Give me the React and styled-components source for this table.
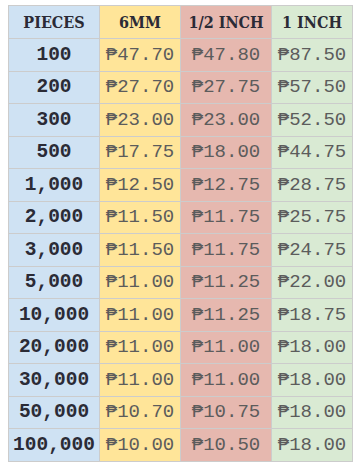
import React from 'react'
import styled, { createGlobalStyle } from 'styled-components'

const GlobalStyle = createGlobalStyle`
    body {
        margin: 0;
        background: #ffffff;
    }
`

const Wrap = styled.div`
    padding: 5px 0 0 8px;
`

const Table = styled.table`
    border-collapse: collapse;
    table-layout: fixed;
    width: 344px;
`

const Col = styled.col`
    width: ${(props) => props.width}px;
`

const Head = styled.th`
    height: 32px;
    padding: 0;
    background: ${(props) => props.bg};
    border: 1px solid #cccccc;
    font-family: "DejaVu Serif", serif;
    font-stretch: condensed;
    font-weight: bold;
    font-size: 16px;
    color: #2b2b36;
    text-align: center;
    white-space: nowrap;
`

const Cell = styled.td`
    height: 31.5px;
    padding: 0;
    background: ${(props) => props.bg};
    border: 1px solid #cccccc;
    font-family: "Liberation Mono", "DejaVu Sans Mono", monospace;
    font-weight: ${(props) => (props.bold ? 'bold' : 'normal')};
    font-size: ${(props) => (props.bold ? '19.5px' : '19px')};
    color: ${(props) => (props.bold ? '#2b2b36' : '#5c5c5c')};
    text-align: center;
    white-space: nowrap;
`

const colors = ['#cfe2f3', '#ffe599', '#e6b8af', '#d9ead3']

const rows = [
    ['100', '47.70', '47.80', '87.50'],
    ['200', '27.70', '27.75', '57.50'],
    ['300', '23.00', '23.00', '52.50'],
    ['500', '17.75', '18.00', '44.75'],
    ['1,000', '12.50', '12.75', '28.75'],
    ['2,000', '11.50', '11.75', '25.75'],
    ['3,000', '11.50', '11.75', '24.75'],
    ['5,000', '11.00', '11.25', '22.00'],
    ['10,000', '11.00', '11.25', '18.75'],
    ['20,000', '11.00', '11.00', '18.00'],
    ['30,000', '11.00', '11.00', '18.00'],
    ['50,000', '10.70', '10.75', '18.00'],
    ['100,000', '10.00', '10.50', '18.00'],
]

function App() {
    return (
        <>
            <GlobalStyle />
            <Wrap>
                <Table>
                    <colgroup>
                        <Col width={91} />
                        <Col width={81} />
                        <Col width={91} />
                        <Col width={81} />
                    </colgroup>
                    <thead>
                        <tr>
                            <Head bg={colors[0]}>PIECES</Head>
                            <Head bg={colors[1]}>6MM</Head>
                            <Head bg={colors[2]}>1/2 INCH</Head>
                            <Head bg={colors[3]}>1 INCH</Head>
                        </tr>
                    </thead>
                    <tbody>
                        {rows.map((r) => (
                            <tr key={r[0]}>
                                <Cell bg={colors[0]} bold>{r[0]}</Cell>
                                <Cell bg={colors[1]}>₱{r[1]}</Cell>
                                <Cell bg={colors[2]}>₱{r[2]}</Cell>
                                <Cell bg={colors[3]}>₱{r[3]}</Cell>
                            </tr>
                        ))}
                    </tbody>
                </Table>
            </Wrap>
        </>
    )
}

export default App
